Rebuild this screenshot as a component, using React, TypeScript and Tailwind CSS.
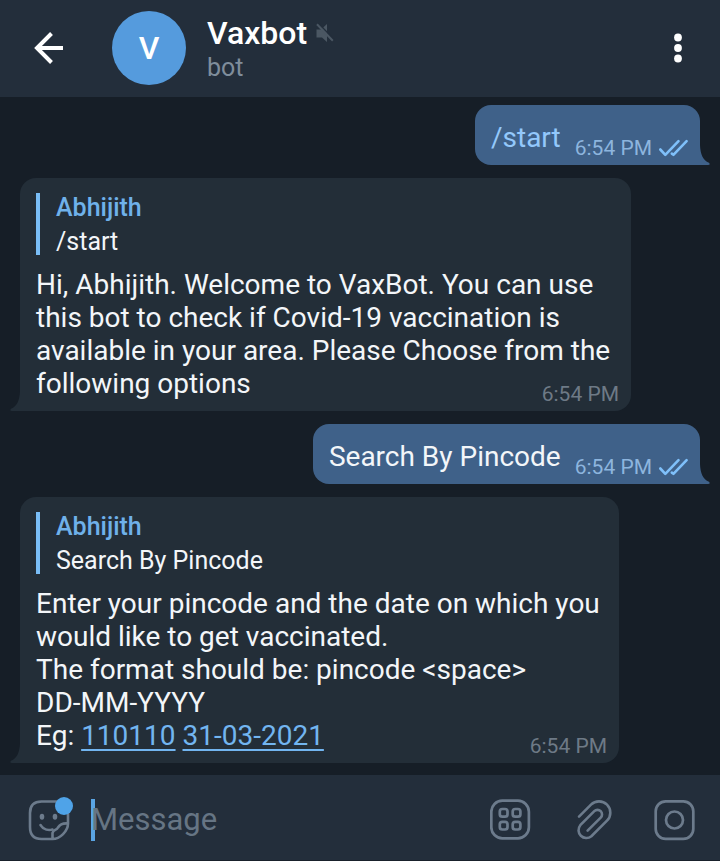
import type { ReactNode } from "react";

function Tail({ side }: { side: "left" | "right" }) {
  return (
    <svg
      aria-hidden="true"
      viewBox="0 0 10 20"
      className={
        side === "right"
          ? "absolute bottom-0 left-full h-5 w-2.5 fill-[#3f6189]"
          : "absolute right-full bottom-0 h-5 w-2.5 -scale-x-100 fill-[#232e38]"
      }
    >
      <path d="M0 0C.3 9 3 15.500 9 17.800Q10.800 20 8 20H0Z" />
    </svg>
  );
}

function DoubleCheck() {
  return (
    <svg
      role="img"
      aria-label="Read"
      viewBox="0 0 32 20"
      className="ml-1.5 h-5 w-8 fill-none stroke-[#7fc0fa] stroke-[2.6]"
      strokeLinecap="round"
      strokeLinejoin="round"
    >
      <path d="M2.300 10.500 7.300 15.800 20.500 2.200M13.800 14.600 15.400 15.800 28.600 2.200" />
    </svg>
  );
}

function Outgoing({ children }: { children: ReactNode }) {
  return (
    <article className="relative flex h-[60px] self-end rounded-2xl rounded-br-none bg-[#3f6189] pt-4 pr-2.5 pl-4">
      <div className="text-[28px] leading-[33px]">{children}</div>
      <div className="mt-[11px] ml-3.5 flex h-[33px] items-center text-[#8db5de]">
        <time className="text-[21px] leading-[33px]">6:54 PM</time>
        <DoubleCheck />
      </div>
      <Tail side="right" />
    </article>
  );
}

function Incoming({ quote, width, children }: { quote: string; width: string; children: ReactNode }) {
  return (
    <article
      className={`relative w-full self-start rounded-2xl rounded-bl-none bg-[#232e38] pt-[15px] pr-3 pb-[11px] pl-4 ${width}`}
    >
      <blockquote className="mb-[13px] flex h-[62px] flex-col border-l-4 border-[#79bdf6] pl-4 text-[25px] leading-[34px]">
        <div className="-mt-0.5 font-medium text-[#6fb1ea]">Abhijith</div>
        <div>{quote}</div>
      </blockquote>
      <div className="text-[28px] leading-[33px]">
        {children}
        <time className="float-right mt-[11px] h-5 text-[21px] leading-[33px] text-[#6e7a86]">6:54 PM</time>
      </div>
      <Tail side="left" />
    </article>
  );
}

export default function App() {
  return (
    <div className="flex min-h-screen flex-col bg-[#161e27] font-['Roboto',sans-serif] text-[#f3f6f9]">
      <header className="flex h-[97px] items-center bg-[#232e3b] pr-5 pb-px pl-7">
        <button type="button" aria-label="Back" className="h-10 w-10">
          <svg viewBox="0 0 40 40" className="h-10 w-10 fill-none stroke-white stroke-4">
            <path d="M23.500 5.500 9 20l14.500 14.500M9 20h26" />
          </svg>
        </button>
        <div className="ml-11 flex h-[74px] w-[74px] shrink-0 items-center justify-center rounded-full bg-[#559bdd] text-[32px] font-medium text-white">
          V
        </div>
        <div className="ml-[21px] flex-1 pt-1">
          <div className="flex items-center">
            <h1 className="text-[32px] leading-9 font-medium text-white">Vaxbot</h1>
            <svg role="img" aria-label="Muted" viewBox="0 0 20 22" className="ml-2 h-[22px] w-5">
              <path d="M1.500 7.500H6L12 2V20L7 15.500H1.500Z" className="fill-[#4b5763]" />
              <path d="M3.500 1.500 19 17.500" className="fill-none stroke-[#232e3b] stroke-[1.600]" />
              <path d="M2 2.300 17.800 18.700" className="fill-none stroke-[#4b5763] stroke-2" />
            </svg>
          </div>
          <p className="text-[25px] leading-[34px] text-[#7f8d9b]">bot</p>
        </div>
        <button type="button" aria-label="More options" className="h-11 w-11">
          <svg viewBox="0 0 44 44" className="h-11 w-11 fill-white">
            <circle cx="22" cy="11.500" r="3.900" />
            <circle cx="22" cy="22" r="3.900" />
            <circle cx="22" cy="32.500" r="3.900" />
          </svg>
        </button>
      </header>

      <main className="flex flex-1 flex-col gap-[13px] px-5 pt-2 pb-3">
        <Outgoing>
          <a href="#start" className="text-[#93c8fb]">
            /start
          </a>
        </Outgoing>
        <Incoming quote="/start" width="max-w-[611px]">
          Hi, Abhijith. Welcome to VaxBot. You can use this bot to check if Covid-19 vaccination is
          available in your area. Please Choose from the following options
        </Incoming>
        <Outgoing>Search By Pincode</Outgoing>
        <Incoming quote="Search By Pincode" width="max-w-[599px]">
          Enter your pincode and the date on which you would like to get vaccinated.
          <br />
          The format should be: pincode &lt;space&gt;{" "}
          <span className="whitespace-nowrap">DD-MM-YYYY</span>
          <br />
          Eg:{" "}
          <a href="#pincode" className="text-[#72b5f0] underline decoration-2 underline-offset-4">
            110110
          </a>{" "}
          <a href="#date" className="text-[#72b5f0] underline decoration-2 underline-offset-4">
            31-03-2021
          </a>
        </Incoming>
      </main>

      <footer className="flex h-[86px] items-center border-b border-[#19212b] bg-[#232e3b] pt-1 pr-6 pl-7">
        <button type="button" aria-label="Stickers" className="h-[42px] w-[46px] shrink-0">
          <svg viewBox="0 0 46 42" className="h-[42px] w-[46px] overflow-visible">
            <g className="fill-none stroke-[#6c7b8c] stroke-[2.6]" strokeLinecap="round" strokeLinejoin="round">
              <path d="M40 24.500V14Q40 2.500 28.500 2.500H13.500Q2 2.500 2 14V28Q2 40 13.500 40H24.500C32 40 40 32 40 24.500C34.500 24 31.800 25.500 30 28.500C28.500 31.500 25 30.500 24.500 34V40" />
              <path d="M12.500 26C15.500 31 21 31.500 24.500 30.500" />
            </g>
            <g className="fill-[#6c7b8c]">
              <ellipse cx="14" cy="17.700" rx="2.300" ry="3" />
              <ellipse cx="27" cy="17.700" rx="2.300" ry="3" />
            </g>
            <circle cx="36" cy="7" r="9" className="fill-[#4fa3e8]" />
          </svg>
        </button>
        <span aria-hidden="true" className="-mr-1 ml-[17px] h-[42px] w-1 shrink-0 bg-[#5aa5e4]" />
        <input
          type="text"
          aria-label="Message"
          placeholder="Message"
          className="h-12 min-w-0 flex-1 bg-transparent text-[31px] text-white outline-none placeholder:text-[#667584]"
        />
        <div className="flex gap-10">
          <button type="button" aria-label="Bot commands" className="h-[42px] w-[42px]">
            <svg viewBox="0 0 42 42" className="h-[42px] w-[42px] fill-none stroke-[#6c7b8c] stroke-[2.7]">
              <rect x="1.300" y="1.700" width="37.600" height="37.600" rx="11" />
              <rect x="9.800" y="10" width="7.700" height="7.700" rx="2.500" />
              <rect x="22.700" y="10" width="7.700" height="7.700" rx="2.500" />
              <rect x="9.800" y="22.800" width="7.700" height="7.700" rx="2.500" />
              <rect x="22.700" y="22.800" width="7.700" height="7.700" rx="2.500" />
            </svg>
          </button>
          <button type="button" aria-label="Attach" className="h-[42px] w-[42px]">
            <svg
              viewBox="0 1 42 42"
              className="h-[42px] w-[42px] fill-none stroke-[#6c7b8c] stroke-[2.6]"
              strokeLinecap="round"
            >
              <path d="M7 18.700 19 6.700A11.300 11.300 0 0 1 35 22.700L19.400 38.200A7.850 7.850 0 0 1 8.300 27.200L22.300 13.200A4.500 4.500 0 0 1 28.700 19.600L15.600 32.700" />
            </svg>
          </button>
          <button type="button" aria-label="Record video" className="h-[42px] w-[42px]">
            <svg viewBox="0 0 42 42" className="h-[42px] w-[42px] fill-none stroke-[#6c7b8c] stroke-[2.7]">
              <rect x="1.700" y="2.300" width="37.600" height="37.600" rx="10" />
              <circle cx="20.500" cy="21" r="8.500" />
            </svg>
          </button>
        </div>
      </footer>
    </div>
  );
}
